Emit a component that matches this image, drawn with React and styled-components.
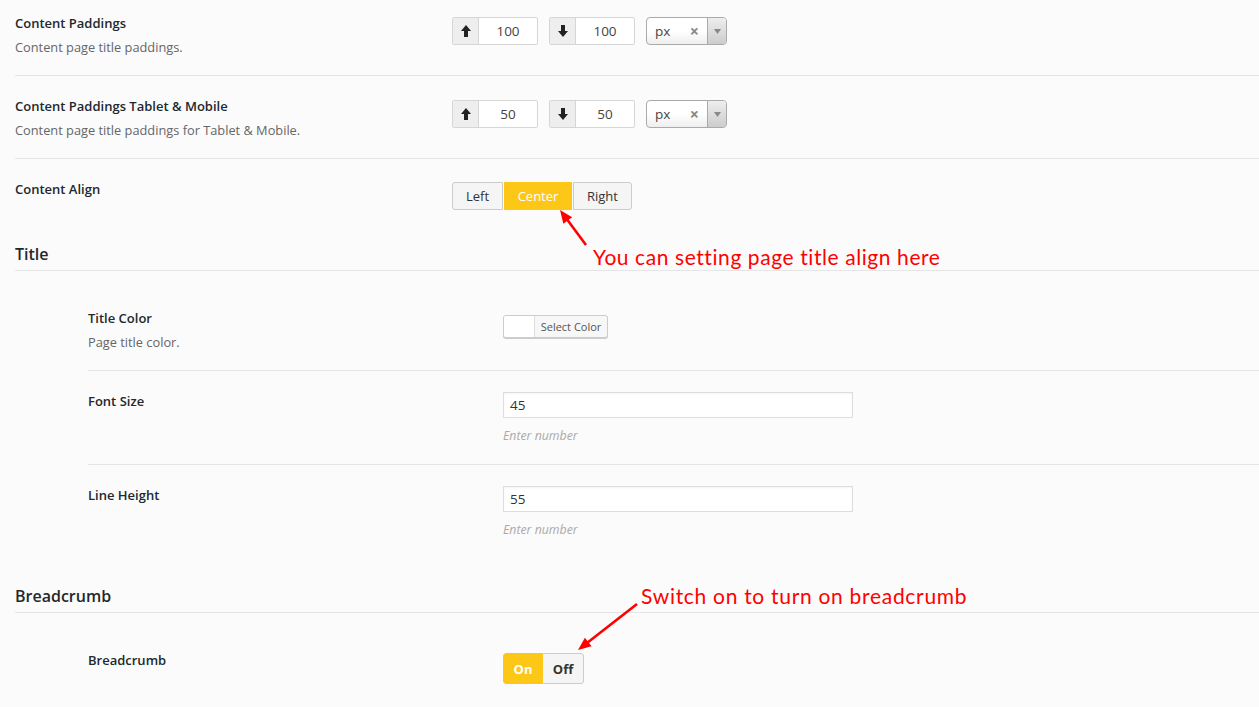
import React from "react";
import styled, { createGlobalStyle } from "styled-components";

const GlobalStyle = createGlobalStyle`
  html, body { margin: 0; padding: 0; background: #fbfbfb; }
  body { font-family: "Open Sans", "Noto Sans", sans-serif; color: #23282d; }
  * { box-sizing: border-box; }
`;

const Page = styled.div`
  position: relative;
  width: 1259px;
  height: 707px;
  overflow: hidden;
  padding-left: 15px;
  background: #fbfbfb;
`;

const Row = styled.div`
  display: grid;
  grid-template-columns: ${(p) => (p.$nested ? "415px" : "437px")} 1fr;
  margin-left: ${(p) => (p.$nested ? "73px" : "0")};
  padding: ${(p) => p.$top || 21}px 0 19px;
  border-bottom: ${(p) => (p.$noBorder ? "none" : "1px solid #e5e5e5")};
`;

const Info = styled.div`
  display: flex;
  flex-direction: column;
  gap: 6px;
`;

const Label = styled.div`
  font-size: 13px;
  font-weight: 600;
  line-height: 18px;
  color: #23282d;
`;

const Desc = styled.div`
  font-size: 12.8px;
  line-height: 18px;
  color: #666;
`;

const Controls = styled.div`
  display: flex;
  flex-direction: ${(p) => (p.$column ? "column" : "row")};
  align-items: flex-start;
  gap: ${(p) => (p.$column ? "9px" : "11px")};
  padding-top: ${(p) => p.$offset || 0}px;
`;

const NumberGroup = styled.div`
  display: flex;
  width: 86px;
  height: 28px;
  border: 1px solid #d6d6d6;
  border-radius: 2px;
  background: #fff;
`;

const Addon = styled.div`
  width: 26px;
  flex: none;
  display: flex;
  align-items: center;
  justify-content: center;
  background: #eee;
  border-right: 1px solid #d6d6d6;
`;

const NumberValue = styled.div`
  flex: 1;
  display: flex;
  align-items: center;
  justify-content: center;
  font-size: 13.5px;
  color: #444;
`;

const Select = styled.div`
  display: flex;
  width: 81px;
  height: 28px;
  border: 1px solid #aaa;
  border-radius: 4px;
  background: linear-gradient(#fff 0%, #fff 50%, #eee 100%);
  overflow: hidden;
`;

const SelectValue = styled.div`
  flex: 1;
  display: flex;
  align-items: center;
  justify-content: space-between;
  padding: 0 8px 0 8px;
  font-size: 13.5px;
  color: #444;
`;

const Clear = styled.span`
  font-size: 16px;
  font-weight: 700;
  color: #888;
`;

const SelectArrow = styled.div`
  width: 19px;
  flex: none;
  display: flex;
  align-items: center;
  justify-content: center;
  border-left: 1px solid #aaa;
  background: linear-gradient(#eee, #ccc);
`;

const ButtonGroup = styled.div`
  display: flex;
  height: 28px;
`;

const SegButton = styled.div`
  display: flex;
  align-items: center;
  justify-content: center;
  width: ${(p) => p.$w}px;
  height: 28px;
  font-size: 13px;
  color: ${(p) => (p.$active ? "#fff" : "#333")};
  background: ${(p) => (p.$active ? "#fdc717" : "#f5f5f5")};
  border: 1px solid ${(p) => (p.$active ? "#fdc717" : "#ccc")};
  border-radius: ${(p) => p.$radius};
  margin-left: ${(p) => (p.$first ? "0" : "1px")};
`;

const SectionHeading = styled.div`
  padding: 14px 0 5px;
  font-size: 16px;
  font-weight: 600;
  line-height: 22px;
  color: #23282d;
  border-bottom: 1px solid #e5e5e5;
`;

const SectionBody = styled.div`
  padding: 17px 0 ${(p) => (p.$last ? 0 : 13)}px;
`;

const ColorPicker = styled.div`
  display: flex;
  width: 105px;
  height: 23px;
  border: 1px solid #ccc;
  border-radius: 3px;
  box-shadow: 0 1px 0 #ccc;
  background: #f7f7f7;
  overflow: hidden;
`;

const Swatch = styled.div`
  width: 31px;
  background: #fff;
  border-right: 1px solid #ddd;
`;

const ColorLabel = styled.div`
  flex: 1;
  display: flex;
  align-items: center;
  justify-content: center;
  font-size: 11px;
  color: #555;
`;

const TextInput = styled.div`
  width: 350px;
  height: 26px;
  display: flex;
  align-items: center;
  padding: 0 6px;
  background: #fff;
  border: 1px solid #ddd;
  box-shadow: inset 0 1px 2px rgba(0, 0, 0, 0.05);
  font-size: 13.5px;
  color: #333;
`;

const Hint = styled.div`
  font-size: 12.3px;
  font-style: italic;
  line-height: 18px;
  color: #aaa;
`;

const Switch = styled.div`
  display: flex;
  height: 31px;
  border-radius: 3px;
  overflow: hidden;
`;

const SwitchPart = styled.div`
  width: ${(p) => p.$w}px;
  display: flex;
  align-items: center;
  justify-content: center;
  font-size: 13px;
  font-weight: 700;
  color: ${(p) => (p.$on ? "#fff" : "#333")};
  background: ${(p) => (p.$on ? "#fdc717" : "#f5f5f5")};
  border: 1px solid ${(p) => (p.$on ? "#fdc717" : "#ccc")};
  border-left: ${(p) => (p.$on ? "1px solid #fdc717" : "none")};
  border-radius: ${(p) => (p.$on ? "3px 0 0 3px" : "0 3px 3px 0")};
`;

const Note = styled.div`
  position: absolute;
  left: ${(p) => p.$x}px;
  top: ${(p) => p.$y}px;
  font-family: Lato, "Open Sans", sans-serif;
  font-size: 21px;
  letter-spacing: ${(p) => p.$ls}px;
  line-height: 26px;
  color: #f00;
  white-space: nowrap;
`;

const ArrowSvg = styled.svg`
  position: absolute;
  left: 0;
  top: 0;
  pointer-events: none;
  overflow: visible;
`;

function Arrow({ x1, y1, x2, y2 }) {
  const dx = x2 - x1;
  const dy = y2 - y1;
  const len = Math.hypot(dx, dy);
  const ux = dx / len;
  const uy = dy / len;
  const hl = 13;
  const hw = 5.5;
  const bx = x2 - ux * hl;
  const by = y2 - uy * hl;
  const px = -uy * hw;
  const py = ux * hw;
  return (
    <ArrowSvg width="1259" height="707">
      <line x1={x1} y1={y1} x2={bx + ux * 2} y2={by + uy * 2} stroke="#f00" strokeWidth="2.6" />
      <polygon
        points={`${x2},${y2} ${bx + px},${by + py} ${bx - px},${by - py}`}
        fill="#f00"
      />
    </ArrowSvg>
  );
}

const UpIcon = () => (
  <svg width="10" height="12" viewBox="0 0 10 12">
    <polygon points="5,0 10,6 7,6 7,12 3,12 3,6 0,6" fill="#222" />
  </svg>
);
const DownIcon = () => (
  <svg width="10" height="12" viewBox="0 0 10 12">
    <polygon points="5,12 10,6 7,6 7,0 3,0 3,6 0,6" fill="#222" />
  </svg>
);
const Caret = () => (
  <svg width="7" height="5" viewBox="0 0 7 5">
    <polygon points="0,0 7,0 3.5,5" fill="#888" />
  </svg>
);

function PaddingControls({ top, bottom }) {
  return (
    <Controls $offset={3}>
      <NumberGroup>
        <Addon><UpIcon /></Addon>
        <NumberValue>{top}</NumberValue>
      </NumberGroup>
      <NumberGroup>
        <Addon><DownIcon /></Addon>
        <NumberValue>{bottom}</NumberValue>
      </NumberGroup>
      <Select>
        <SelectValue>px<Clear>×</Clear></SelectValue>
        <SelectArrow><Caret /></SelectArrow>
      </Select>
    </Controls>
  );
}

export default function App() {
  return (
    <>
      <GlobalStyle />
      <Page>
        <Row $top={14}>
          <Info>
            <Label>Content Paddings</Label>
            <Desc>Content page title paddings.</Desc>
          </Info>
          <PaddingControls top="100" bottom="100" />
        </Row>
        <Row>
          <Info>
            <Label>Content Paddings Tablet &amp; Mobile</Label>
            <Desc>Content page title paddings for Tablet &amp; Mobile.</Desc>
          </Info>
          <PaddingControls top="50" bottom="50" />
        </Row>
        <Row $noBorder>
          <Info>
            <Label>Content Align</Label>
          </Info>
          <Controls $offset={2}>
            <ButtonGroup>
              <SegButton $w={51} $first $radius="3px 0 0 3px">Left</SegButton>
              <SegButton $w={68} $active $radius="0">Center</SegButton>
              <SegButton $w={59} $radius="0 3px 3px 0">Right</SegButton>
            </ButtonGroup>
          </Controls>
        </Row>

        <SectionHeading>Title</SectionHeading>
        <SectionBody>
          <Row $nested>
            <Info>
              <Label>Title Color</Label>
              <Desc>Page title color.</Desc>
            </Info>
            <Controls $offset={6}>
              <ColorPicker>
                <Swatch />
                <ColorLabel>Select Color</ColorLabel>
              </ColorPicker>
            </Controls>
          </Row>
          <Row $nested>
            <Info>
              <Label>Font Size</Label>
            </Info>
            <Controls $column>
              <TextInput>45</TextInput>
              <Hint>Enter number</Hint>
            </Controls>
          </Row>
          <Row $nested $noBorder>
            <Info>
              <Label>Line Height</Label>
            </Info>
            <Controls $column>
              <TextInput>55</TextInput>
              <Hint>Enter number</Hint>
            </Controls>
          </Row>
        </SectionBody>

        <SectionHeading>Breadcrumb</SectionHeading>
        <SectionBody $last>
          <Row $nested $noBorder>
            <Info>
              <Label>Breadcrumb</Label>
            </Info>
            <Controls $offset={2}>
              <Switch>
                <SwitchPart $on $w={40}>On</SwitchPart>
                <SwitchPart $w={41}>Off</SwitchPart>
              </Switch>
            </Controls>
          </Row>
        </SectionBody>

        <Note $x={593} $y={244} $ls={0.58}>You can setting page title align here</Note>
        <Note $x={641} $y={583} $ls={0.7}>Switch on to turn on breadcrumb</Note>
        <Arrow x1={586} y1={245} x2={560} y2={210} />
        <Arrow x1={637} y1={604} x2={578} y2={650} />
      </Page>
    </>
  );
}
